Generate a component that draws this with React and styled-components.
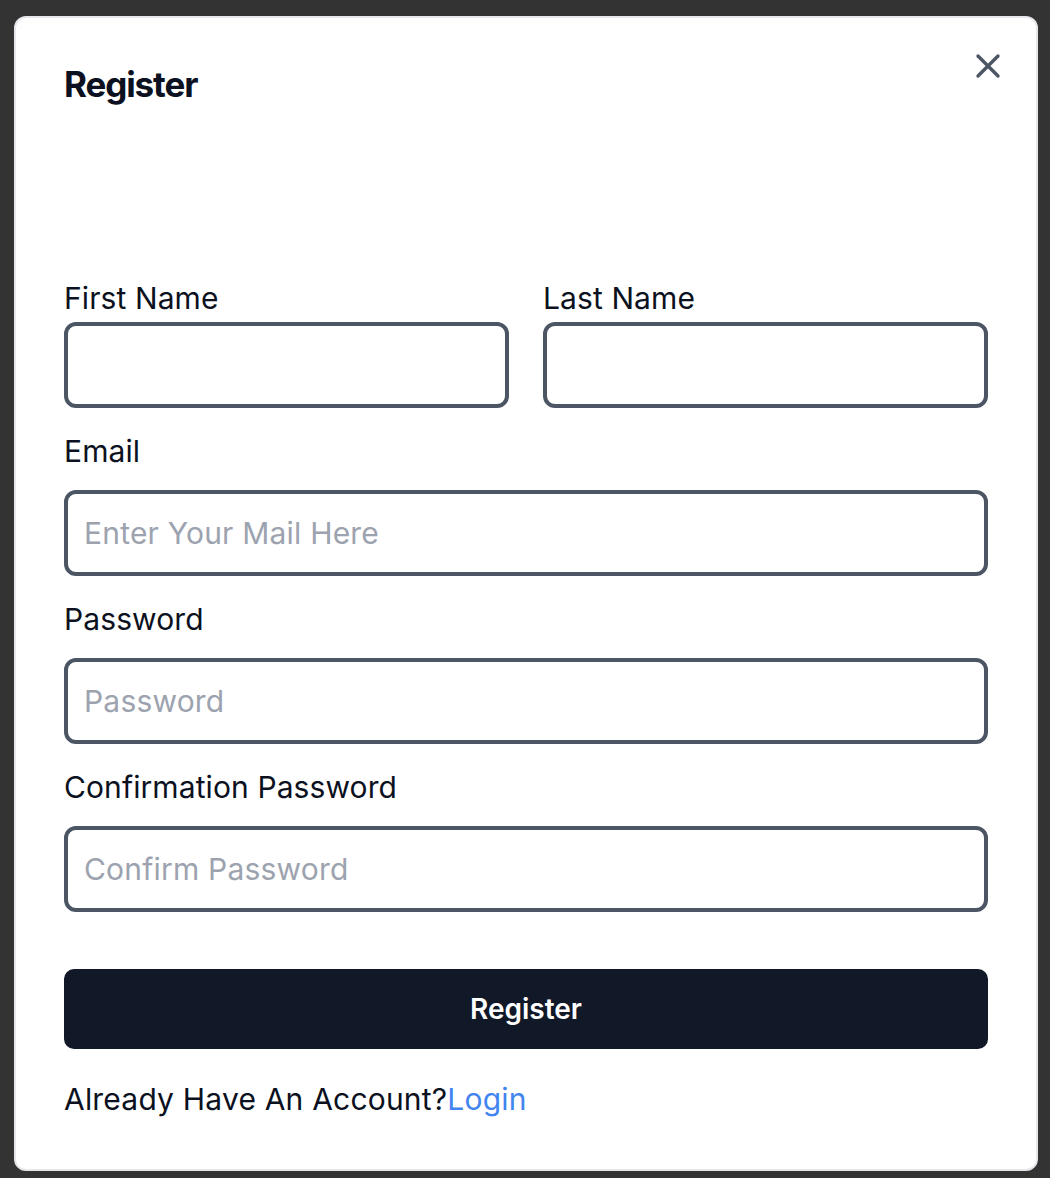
import React from 'react';
import styled, { createGlobalStyle } from 'styled-components';
import { X } from 'lucide-react';

const GlobalStyle = createGlobalStyle`
  html, body {
    margin: 0;
    padding: 0;
    background: #333333;
  }

  body {
    font-family: Inter, "Noto Sans", "Liberation Sans", sans-serif;
    color: #111827;
  }

  * {
    box-sizing: border-box;
  }
`;

const Page = styled.div`
  min-height: 1178px;
  padding: 16px 12px 0 14px;
`;

const Modal = styled.div`
  position: relative;
  width: 1024px;
  height: 1155px;
  background: #ffffff;
  border: 2px solid #e5e7eb;
  border-radius: 12px;
  padding: 46px 48px 0;
`;

const CloseButton = styled.button`
  position: absolute;
  top: 28px;
  right: 28px;
  width: 40px;
  height: 40px;
  padding: 0;
  border: none;
  background: transparent;
  color: #4b5563;
  display: flex;
  align-items: center;
  justify-content: center;
  cursor: pointer;
`;

const Title = styled.h2`
  margin: 0;
  font-size: 35px;
  line-height: 40px;
  font-weight: 700;
  letter-spacing: -1.1px;
  color: #0b1120;
`;

const Form = styled.form`
  margin-top: 176px;
  display: flex;
  flex-direction: column;
  gap: 25px;
`;

const NameRow = styled.div`
  display: grid;
  grid-template-columns: 1fr 1fr;
  column-gap: 34px;
`;

const Field = styled.div`
  display: flex;
  flex-direction: column;
`;

const Label = styled.label`
  font-size: 30px;
  line-height: 36px;
  letter-spacing: 0.1px;
  color: #0b1120;
  margin-bottom: ${(p) => (p.$tight ? '6px' : '21px')};
`;

const Input = styled.input`
  width: 100%;
  height: 86px;
  border: 4px solid #4b5563;
  border-radius: 12px;
  padding: 0 16px;
  font-family: inherit;
  font-size: 30px;
  letter-spacing: 0.2px;
  color: #111827;
  background: #ffffff;
  outline: none;

  &::placeholder {
    color: #9ca3af;
  }
`;

const SubmitButton = styled.button`
  margin-top: 32px;
  width: 100%;
  height: 80px;
  border: none;
  border-radius: 10px;
  background: #111827;
  color: #ffffff;
  font-family: inherit;
  font-size: 28px;
  font-weight: 600;
  cursor: pointer;
`;

const Footer = styled.p`
  margin: 32px 0 0;
  font-size: 30px;
  line-height: 36px;
  letter-spacing: 0.2px;
  color: #0b1120;
`;

const LoginLink = styled.a`
  color: #4285f0;
  text-decoration: none;
`;

const App = () => {
  return (
    <>
      <GlobalStyle />
      <Page>
        <Modal>
          <CloseButton type="button" aria-label="Close">
            <X size={40} strokeWidth={2} />
          </CloseButton>
          <Title>Register</Title>

          <Form onSubmit={(e) => e.preventDefault()}>
            <NameRow>
              <Field>
                <Label $tight htmlFor="first-name">First Name</Label>
                <Input id="first-name" type="text" />
              </Field>
              <Field>
                <Label $tight htmlFor="last-name">Last Name</Label>
                <Input id="last-name" type="text" />
              </Field>
            </NameRow>

            <Field>
              <Label htmlFor="email">Email</Label>
              <Input id="email" type="email" placeholder="Enter Your Mail Here" />
            </Field>

            <Field>
              <Label htmlFor="password">Password</Label>
              <Input id="password" type="password" placeholder="Password" />
            </Field>

            <Field>
              <Label htmlFor="confirm">Confirmation Password</Label>
              <Input id="confirm" type="password" placeholder="Confirm Password" />
            </Field>

            <SubmitButton type="submit">Register</SubmitButton>
          </Form>

          <Footer>
            Already Have An Account?<LoginLink href="#">Login</LoginLink>
          </Footer>
        </Modal>
      </Page>
    </>
  );
};

export default App;
